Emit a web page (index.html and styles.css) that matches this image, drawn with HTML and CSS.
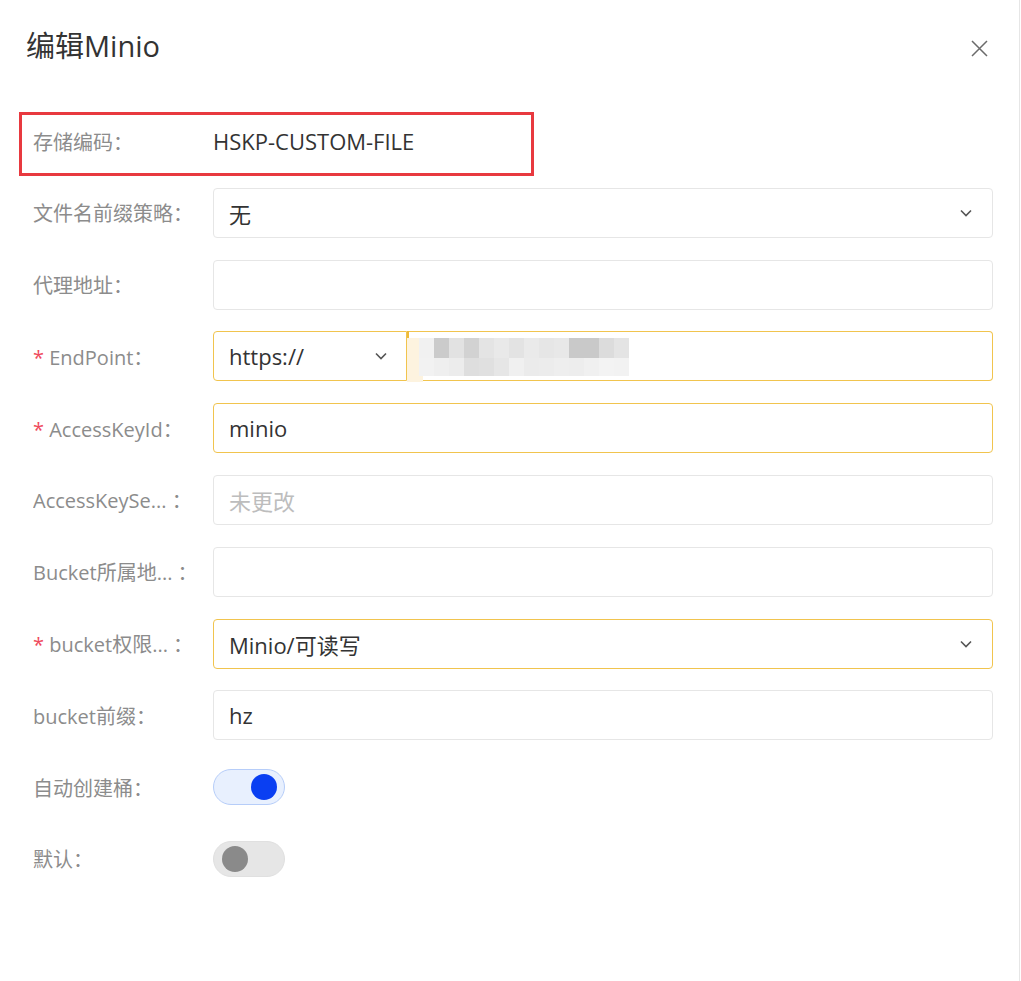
FILE: index.html
```html
<!DOCTYPE html>
<html lang="zh-CN">
<head>
    <meta charset="UTF-8">
    <meta name="viewport" content="width=device-width, initial-scale=1.0">
    <title>编辑Minio</title>
    <link rel="stylesheet" href="styles.css">
</head>
<body>
    <div class="dialog">
        <div class="dialog-header">
            <h2 class="dialog-title">编辑Minio</h2>
            <button class="close-btn" aria-label="关闭">
                <svg width="17" height="17" viewBox="0 0 17 17">
                    <path d="M1 1L16 16M16 1L1 16" stroke="#6b6b6b" stroke-width="1.5" fill="none"/>
                </svg>
            </button>
        </div>

        <form class="form">
            <div class="form-row marked">
                <label class="form-label">存储编码：</label>
                <div class="form-control">HSKP-CUSTOM-FILE</div>
                <div class="mark-box"></div>
            </div>

            <div class="form-row">
                <label class="form-label">文件名前缀策略：</label>
                <div class="form-control">
                    <div class="select">
                        <span>无</span>
                        <svg class="chevron" width="12" height="8" viewBox="0 0 12 8"><path d="M1 1.5L6 6.5L11 1.5" stroke="#555" stroke-width="1.6" fill="none"/></svg>
                    </div>
                </div>
            </div>

            <div class="form-row">
                <label class="form-label">代理地址：</label>
                <div class="form-control"><div class="input"></div></div>
            </div>

            <div class="form-row">
                <label class="form-label"><span class="req">*</span> EndPoint：</label>
                <div class="form-control group">
                    <div class="select warn prefix">
                        <span>https://</span>
                        <svg class="chevron" width="12" height="8" viewBox="0 0 12 8"><path d="M1 1.5L6 6.5L11 1.5" stroke="#555" stroke-width="1.6" fill="none"/></svg>
                    </div>
                    <div class="input warn suffix">
                        <div class="caret-glow"></div>
                        <div class="mosaic">
                            <div class="mosaic-row top">
                                <i style="background:#f1f1f1"></i><i style="background:#cbcbcb"></i><i style="background:#e2e2e2"></i><i style="background:#d2d2d2"></i><i style="background:#e4e4e4"></i><i style="background:#e9e9e9"></i><i style="background:#e3e3e3"></i><i style="background:#eaeaea"></i><i style="background:#e6e6e6"></i><i style="background:#e8e8e8"></i><i style="background:#c9c9c9"></i><i style="background:#c9c9c9"></i><i style="background:#dcdcdc"></i><i style="background:#e4e4e4"></i>
                            </div>
                            <div class="mosaic-row bottom">
                                <i style="background:#f2f2f2"></i><i style="background:#efefef"></i><i style="background:#ececec"></i><i style="background:#dedede"></i><i style="background:#e0e0e0"></i><i style="background:#e6e6e6"></i><i style="background:#f0f0f0"></i><i style="background:#ebebeb"></i><i style="background:#ececec"></i><i style="background:#eeeeee"></i><i style="background:#ededed"></i><i style="background:#f0f0f0"></i><i style="background:#f3f3f3"></i><i style="background:#f2f2f2"></i>
                            </div>
                        </div>
                    </div>
                </div>
            </div>

            <div class="form-row">
                <label class="form-label"><span class="req">*</span> AccessKeyId：</label>
                <div class="form-control"><div class="input warn">minio</div></div>
            </div>

            <div class="form-row">
                <label class="form-label">AccessKeySe... ：</label>
                <div class="form-control"><div class="input placeholder">未更改</div></div>
            </div>

            <div class="form-row">
                <label class="form-label">Bucket所属地... ：</label>
                <div class="form-control"><div class="input"></div></div>
            </div>

            <div class="form-row">
                <label class="form-label"><span class="req">*</span> bucket权限... ：</label>
                <div class="form-control">
                    <div class="select warn">
                        <span>Minio/可读写</span>
                        <svg class="chevron" width="12" height="8" viewBox="0 0 12 8"><path d="M1 1.5L6 6.5L11 1.5" stroke="#555" stroke-width="1.6" fill="none"/></svg>
                    </div>
                </div>
            </div>

            <div class="form-row">
                <label class="form-label">bucket前缀：</label>
                <div class="form-control"><div class="input">hz</div></div>
            </div>

            <div class="form-row">
                <label class="form-label">自动创建桶：</label>
                <div class="form-control"><div class="switch on"><span class="knob"></span></div></div>
            </div>

            <div class="form-row">
                <label class="form-label">默认：</label>
                <div class="form-control"><div class="switch"><span class="knob"></span></div></div>
            </div>
        </form>
    </div>
</body>
</html>
```

FILE: styles.css
```css
body {
    margin: 0;
    padding: 0;
    background-color: #fff;
    font-family: "Open Sans", "Noto Sans CJK SC", sans-serif;
    color: #333;
}

.dialog {
    width: 1020px;
    min-height: 981px;
    border-right: 1px solid #e6e6e6;
    box-sizing: border-box;
}

.dialog-header {
    display: flex;
    align-items: center;
    justify-content: space-between;
    padding: 22px 31px 0 26px;
    height: 44px;
}

.dialog-title {
    margin: 0;
    font-size: 29px;
    font-weight: 400;
    color: #333;
}

.close-btn {
    background: none;
    border: none;
    padding: 0;
    cursor: pointer;
    display: flex;
    margin-top: 8px;
}

.form {
    padding: 50px 26px 0 33px;
}

.form-row {
    display: flex;
    align-items: center;
    height: 50px;
    margin-bottom: 21.8px;
    position: relative;
}

.form-label {
    width: 180px;
    flex-shrink: 0;
    font-size: 20px;
    color: #8c8c8c;
    white-space: nowrap;
    overflow: hidden;
}

.req {
    color: #ef4a5c;
}

.form-control {
    flex: 1;
    font-size: 22px;
    color: #333;
}

/* red annotation box */
.mark-box {
    position: absolute;
    left: -14px;
    top: -4px;
    width: 515px;
    height: 64px;
    border: 3px solid #e8393f;
    box-sizing: border-box;
    pointer-events: none;
}

.input,
.select {
    height: 50px;
    border: 1px solid #e6e6e6;
    border-radius: 4px;
    box-sizing: border-box;
    padding: 0 15px;
    display: flex;
    align-items: center;
    background: #fff;
}

.select {
    justify-content: space-between;
    padding-right: 20px;
}

.warn {
    border-color: #f1c44e;
}

.placeholder {
    color: #bdbdbd;
}

.group {
    display: flex;
}

.prefix {
    width: 194px;
    flex-shrink: 0;
    border-radius: 4px 0 0 4px;
    padding-right: 19px;
}

.suffix {
    flex: 1;
    border-left: none;
    border-radius: 0 4px 4px 0;
    position: relative;
    padding-left: 12px;
}

.suffix::before {
    content: "";
    position: absolute;
    left: 0;
    top: -1px;
    bottom: -1px;
    width: 2px;
    background: #eebb3a;
}

.caret-glow {
    position: absolute;
    left: 0;
    top: 6px;
    width: 16px;
    height: 44px;
    background: #fdf3df;
}

.mosaic {
    display: flex;
    flex-direction: column;
    position: relative;
    margin-top: 2px;
}

.mosaic-row {
    display: flex;
}

.mosaic-row i {
    display: block;
    width: 15px;
}

.mosaic-row.top i {
    height: 20px;
}

.mosaic-row.bottom i {
    height: 18px;
}

.switch {
    width: 72px;
    height: 36px;
    border-radius: 18px;
    background: #e6e6e6;
    border: 1px solid #e0e0e0;
    box-sizing: border-box;
    display: flex;
    align-items: center;
    padding: 0 8px;
}

.switch .knob {
    width: 26px;
    height: 26px;
    border-radius: 50%;
    background: #8a8a8a;
}

.switch.on {
    background: #e8f0fe;
    border-color: #b6cdf9;
    justify-content: flex-end;
    padding: 0 7px;
}

.switch.on .knob {
    background: #0a3ff2;
}
```
